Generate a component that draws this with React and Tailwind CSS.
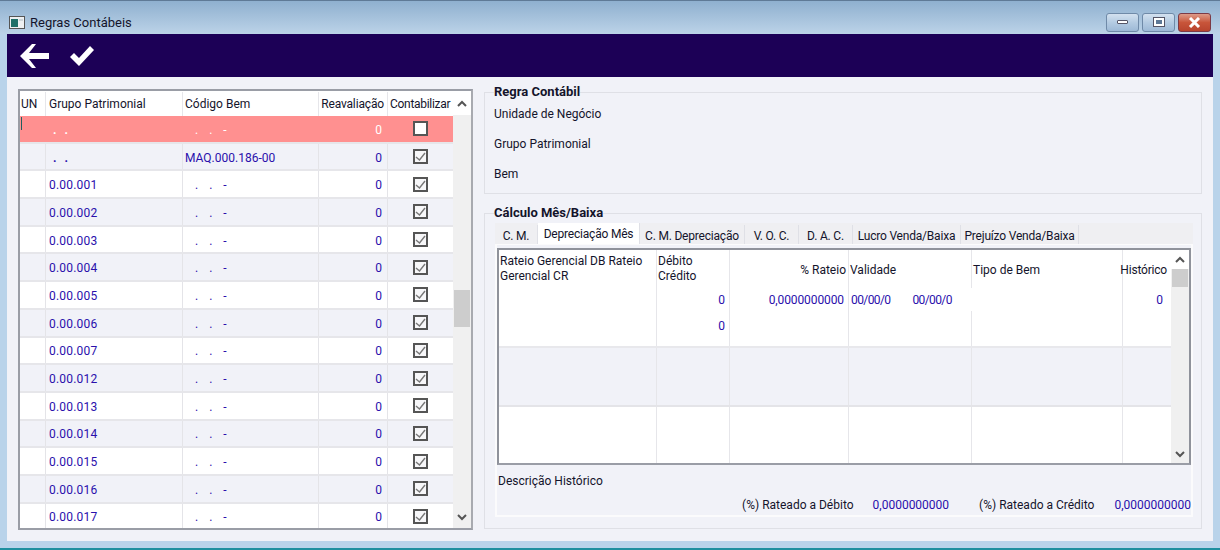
const rows = ['', '', '0.00.001', '0.00.002', '0.00.003', '0.00.004', '0.00.005', '0.00.006', '0.00.007', '0.00.012', '0.00.013', '0.00.014', '0.00.015', '0.00.016', '0.00.017'];
const tabs = [
  { label: 'C. M.', w: 'w-[43px]' },
  { label: 'Depreciação Mês', w: 'w-[102px]', active: true },
  { label: 'C. M. Depreciação', w: 'w-[105px]' },
  { label: 'V. O. C.', w: 'w-[54px]' },
  { label: 'D. A. C.', w: 'w-[54px]' },
  { label: 'Lucro Venda/Baixa', w: 'w-[108px]' },
  { label: 'Prejuízo Venda/Baixa', w: 'w-[118px]' },
];

const ChevronUp = () => (
  <svg width="10" height="7" viewBox="0 0 10 7"><path d="M1 6 L5 2 L9 6" fill="none" stroke="#555" strokeWidth="2" /></svg>
);
const ChevronDown = () => (
  <svg width="10" height="7" viewBox="0 0 10 7"><path d="M1 1 L5 5 L9 1" fill="none" stroke="#555" strokeWidth="2" /></svg>
);

const CheckBox = ({ checked }) => (
  <div className={`w-[15px] h-[15px] border-2 border-[#555] flex items-center justify-center ${checked ? 'bg-[#f7f7f9]' : 'bg-white'}`}>
    {checked && (
      <svg width="11" height="11" viewBox="0 0 11 11"><path d="M1 6 L4.5 9 L10 2" fill="none" stroke="#777" strokeWidth="1.4" /></svg>
    )}
  </div>
);

const WinButton = ({ close, children }) => (
  <div className={`w-[33px] h-[19px] rounded-[3px] border flex items-center justify-center ${close ? 'border-[#7c3a46] bg-gradient-to-b from-[#dd9a88] via-[#c8553a] to-[#b8442e]' : 'border-[#6f8aa8] bg-gradient-to-b from-[#d3e1ef] via-[#b4cbe2] to-[#9db9d6]'}`}>
    {children}
  </div>
);

const LeftGrid = () => (
  <div className="w-[455px] h-[441px] border-2 border-[#9a9da6] border-r-[#a8aab0] bg-white flex overflow-hidden">
    <div className="w-[433px] shrink-0 pt-[1px]">
      <div className="grid grid-cols-[26px_137px_136px_69px_65px] h-[24px] items-center text-[#14142b]">
        <div className="pl-[1px] h-full flex items-center border-r border-[#e6e6ea]">UN</div>
        <div className="pl-[3px] h-full flex items-center border-r border-[#e6e6ea]">Grupo Patrimonial</div>
        <div className="pl-[2px] h-full flex items-center border-r border-[#e6e6ea]">Código Bem</div>
        <div className="pr-[3px] h-full flex items-center justify-end border-r border-[#e6e6ea] tracking-[-0.15px]">Reavaliação</div>
        <div className="pl-[2px] h-full flex items-center tracking-[-0.3px]">Contabilizar</div>
      </div>
      {rows.map((grupo, i) => {
        const pink = i === 0;
        const line = pink ? 'border-[#ff9090]' : 'border-[#e4e4e8]';
        return (
          <div
            key={i}
            className={`grid grid-cols-[26px_137px_136px_69px_65px] h-[27.7px] items-center border-b-2 border-[#e6e6ea] ${pink ? 'bg-[#ff9090] text-white' : i % 2 === 1 ? 'bg-[#f1f2f8] text-[#2a10ac]' : 'bg-white text-[#2a10ac]'}`}
          >
            <div className={`h-full border-r ${line} pl-[1px] pt-[1px]`}>
              {pink && <div className="w-[1px] h-[13px] bg-[#1f5f5f]" />}
            </div>
            <div className={`h-full flex items-center border-r ${line} pl-[3px] pt-[2px] tracking-[0.2px]`}>
              {grupo || <span className="pl-[4px] tracking-[8px] font-bold">..</span>}
            </div>
            <div className={`h-full flex items-center border-r ${line} pl-[2px] pt-[2px]`}>
              {i === 1 ? 'MAQ.000.186-00' : <span className="pl-[10px] tracking-[11px]">..-</span>}
            </div>
            <div className={`h-full flex items-center justify-end border-r ${line} pr-[5px] pt-[2px]`}>0</div>
            <div className="h-full flex items-center justify-center pr-[1px]">
              <CheckBox checked={!pink} />
            </div>
          </div>
        );
      })}
    </div>
    <div className="w-[18px] shrink-0 flex flex-col items-center bg-[#f0f0f0]">
      <div className="w-full h-[24px] bg-white flex items-center justify-center"><ChevronUp /></div>
      <div className="w-[16px] h-[37px] bg-[#cdcdcd] mt-[175px] shrink-0" />
      <div className="mt-auto mb-[7px]"><ChevronDown /></div>
    </div>
  </div>
);

const Cell = ({ className = '', children }) => <div className={`h-full border-r border-[#e6e6ea] ${className}`}>{children}</div>;

const InnerGrid = () => (
  <div className="h-[217px] border-2 border-[#8f929b] border-b-[#9a9da6] bg-white flex overflow-hidden">
    <div className="flex-1 min-w-0">
      <div className="grid grid-cols-[158px_73px_119px_123px_151px_48px] h-[38px] text-[#14142b] leading-[15px]">
        <Cell className="pl-[1px] pt-[4px]">Rateio Gerencial DB Rateio Gerencial CR</Cell>
        <Cell className="pl-[1px] pt-[4px]">Débito<br />Crédito</Cell>
        <Cell className="flex items-center justify-end pr-[2px] pt-[2px]">% Rateio</Cell>
        <Cell className="flex items-center pl-[1px] pt-[2px]">Validade</Cell>
        <Cell className="flex items-center pl-[1px] pt-[2px]">Tipo de Bem</Cell>
        <div className="flex items-center justify-end pr-[4px] pt-[2px] tracking-[-0.2px]">Histórico</div>
      </div>
      <div className="grid grid-cols-[158px_73px_119px_123px_151px_48px] h-[23px] text-[#2a10ac] items-center">
        <Cell />
        <Cell className="flex items-center justify-end pr-[4px]">0</Cell>
        <Cell className="flex items-center justify-end pr-[4px] tracking-[-0.1px]">0,0000000000</Cell>
        <div className="flex h-full items-center pl-[2px] gap-[22px] tracking-[-0.6px]"><span>00/00/0</span><span>00/00/0</span></div>
        <Cell />
        <div className="flex items-center justify-end pr-[8px]">0</div>
      </div>
      <div className="grid grid-cols-[158px_73px_119px_123px_151px_48px] h-[37px] text-[#2a10ac] border-b-2 border-[#e8e8ec]">
        <Cell />
        <Cell className="flex items-center justify-end pr-[4px] pb-[6px]">0</Cell>
        <Cell />
        <Cell />
        <Cell />
      </div>
      <div className="grid grid-cols-[158px_73px_119px_123px_151px_48px] h-[59px] bg-[#f1f2f8] border-b-2 border-[#e4e4e8]">
        <Cell /><Cell /><Cell /><Cell /><Cell />
      </div>
      <div className="grid grid-cols-[158px_73px_119px_123px_151px_48px] h-[56px]">
        <Cell /><Cell /><Cell /><Cell /><Cell />
      </div>
    </div>
    <div className="w-[18px] shrink-0 flex flex-col items-center bg-[#f0f0f0]">
      <div className="w-full h-[19px] bg-white flex items-center justify-center"><ChevronUp /></div>
      <div className="w-[16px] h-[18px] bg-[#cdcdcd] shrink-0" />
      <div className="mt-auto mb-[5px]"><ChevronDown /></div>
    </div>
  </div>
);

const RightPanel = () => (
  <div className="w-[718px] flex flex-col gap-[12px]">
    <fieldset className="h-[109px] border border-[#dfe0e6] px-[9px]">
      <legend className="font-bold text-[13px] text-[#14142b] leading-[14px]">Regra Contábil</legend>
      <div className="flex flex-col gap-[14px] pt-[7px] text-[#14142b] leading-[16px]">
        <div>Unidade de Negócio</div>
        <div>Grupo Patrimonial</div>
        <div>Bem</div>
      </div>
    </fieldset>
    <fieldset className="h-[323px] border border-[#dfe0e6] pl-[10px] pr-[8px]">
      <legend className="ml-[-1px] font-bold text-[13px] text-[#14142b] leading-[14px]">Cálculo Mês/Baixa</legend>
      <div className="flex items-end h-[21px] mt-[3px] bg-[#efeff2] text-[#14142b] tracking-[-0.2px]">
        {tabs.map(t => (
          <div
            key={t.label}
            className={`${t.w} shrink-0 flex items-center justify-center border-r border-[#dfe0e6] ${t.active ? 'h-[21px] bg-white' : 'h-[19px] pt-[2px]'}`}
          >
            {t.label}
          </div>
        ))}
      </div>
      <div className="h-[273px] border-2 border-t border-[#fbfbfc] bg-[#f1f2f8] pt-[3px]">
        <InnerGrid />
        <div className="pl-[1px] pt-[8px] leading-[16px] text-[#14142b]">Descrição Histórico</div>
        <div className="flex items-center justify-end pt-[8px] leading-[16px] text-[#14142b]">
          <span>(%) Rateado a Débito</span>
          <span className="ml-[19px] text-[#2a10ac]">0,0000000000</span>
          <span className="ml-[30px]">(%) Rateado a Crédito</span>
          <span className="ml-[20px] text-[#2a10ac]">0,0000000000</span>
        </div>
      </div>
    </fieldset>
  </div>
);

export default function App() {
  return (
    <div className="w-[1220px] h-[550px] overflow-hidden bg-[#b9d3ea] border-b-2 border-[#1f8f9f] flex flex-col text-[12px] font-['Roboto',sans-serif]">
      <div className="h-[34px] shrink-0 bg-gradient-to-b from-[#8fb0cf] to-[#bcd3e8] flex items-center pl-[9px] pr-[9px] border-t border-[#5f7a96]">
        <svg width="16" height="13" viewBox="0 0 16 13" className="mt-[9px]">
          <rect x="0.5" y="0.5" width="15" height="12" fill="#eef0f2" stroke="#555" />
          <rect x="2" y="3" width="7" height="8" fill="#1f6f68" />
          <rect x="10" y="3" width="4" height="2" fill="#cfd6da" />
        </svg>
        <span className="ml-[5px] mt-[11px] text-[#14142b] text-[13px]">Regras Contábeis</span>
        <div className="ml-auto flex gap-[3px] mt-[9px]">
          <WinButton>
            <div className="w-[11px] h-[4px] bg-white border border-[#556] rounded-[1px]" />
          </WinButton>
          <WinButton>
            <div className="w-[12px] h-[10px] bg-white border border-[#556] flex items-center justify-center"><div className="w-[6px] h-[4px] bg-[#5d7896]" /></div>
          </WinButton>
          <WinButton close>
            <svg width="13" height="11" viewBox="0 0 13 11"><path d="M2 1 L11 10 M11 1 L2 10" stroke="#fff" strokeWidth="3" /></svg>
          </WinButton>
        </div>
      </div>
      <div className="mx-[7px] w-[1206px] h-[507px] flex flex-col bg-[#f1f2f8]">
        <div className="h-[43px] shrink-0 bg-[#1c0056] flex items-center pl-[13px] gap-[21px]">
          <svg width="29" height="24" viewBox="0 0 29 24"><path d="M0 12 L12 0 L16 0 L9 9 L29 9 L29 15 L9 15 L16 24 L12 24 Z" fill="#fff" /></svg>
          <svg width="24" height="20" viewBox="0 0 24 20"><path d="M0 11 L4 7 L9 12 L20 0 L24 4 L9 20 Z" fill="#fff" /></svg>
        </div>
        <div className="flex pl-[11px] pt-[8px]">
          <div className="pt-[4px]"><LeftGrid /></div>
          <div className="ml-[11px]"><RightPanel /></div>
        </div>
      </div>
    </div>
  );
}
